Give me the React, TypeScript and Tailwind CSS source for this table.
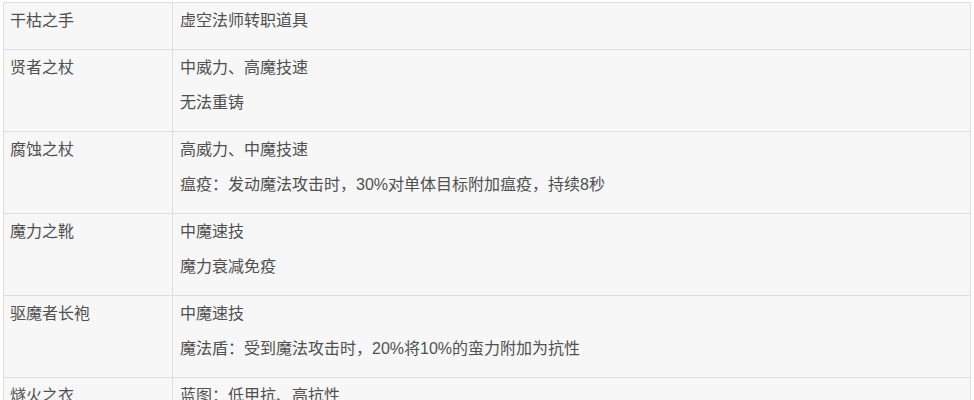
import React from "react";

const rows: { name: string; lines: string[] }[] = [
  { name: "干枯之手", lines: ["虚空法师转职道具"] },
  { name: "贤者之杖", lines: ["中威力、高魔技速", "无法重铸"] },
  {
    name: "腐蚀之杖",
    lines: ["高威力、中魔技速", "瘟疫：发动魔法攻击时，30%对单体目标附加瘟疫，持续8秒"],
  },
  { name: "魔力之靴", lines: ["中魔速技", "魔力衰减免疫"] },
  {
    name: "驱魔者长袍",
    lines: ["中魔速技", "魔法盾：受到魔法攻击时，20%将10%的蛮力附加为抗性"],
  },
  { name: "燧火之衣", lines: ["蓝图：低甲抗、高抗性", "可重铸"] },
];

const App = () => {
  return (
    <div
      className="w-[974px] h-[400px] overflow-hidden bg-white pt-[2px] pl-[3px]"
      style={{ fontFamily: '"Liberation Sans", "Noto Sans CJK SC", sans-serif' }}
    >
      <table className="w-[968px] border-collapse text-[16px] text-[#505050] bg-[#f7f7f7]">
        <tbody>
          {rows.map((row) => (
            <tr key={row.name}>
              <td className="w-[169px] border border-[#dedede] align-top pl-[6px] pt-[8px] pb-[18px]">
                <p className="leading-[20px]">{row.name}</p>
              </td>
              <td className="border border-[#dedede] align-top pl-[7px] pt-[8px] pb-[18px]">
                <div className="flex flex-col gap-[15px]">
                  {row.lines.map((line) => (
                    <p key={line} className="leading-[20px]">
                      {line}
                    </p>
                  ))}
                </div>
              </td>
            </tr>
          ))}
        </tbody>
      </table>
    </div>
  );
};

export default App;
